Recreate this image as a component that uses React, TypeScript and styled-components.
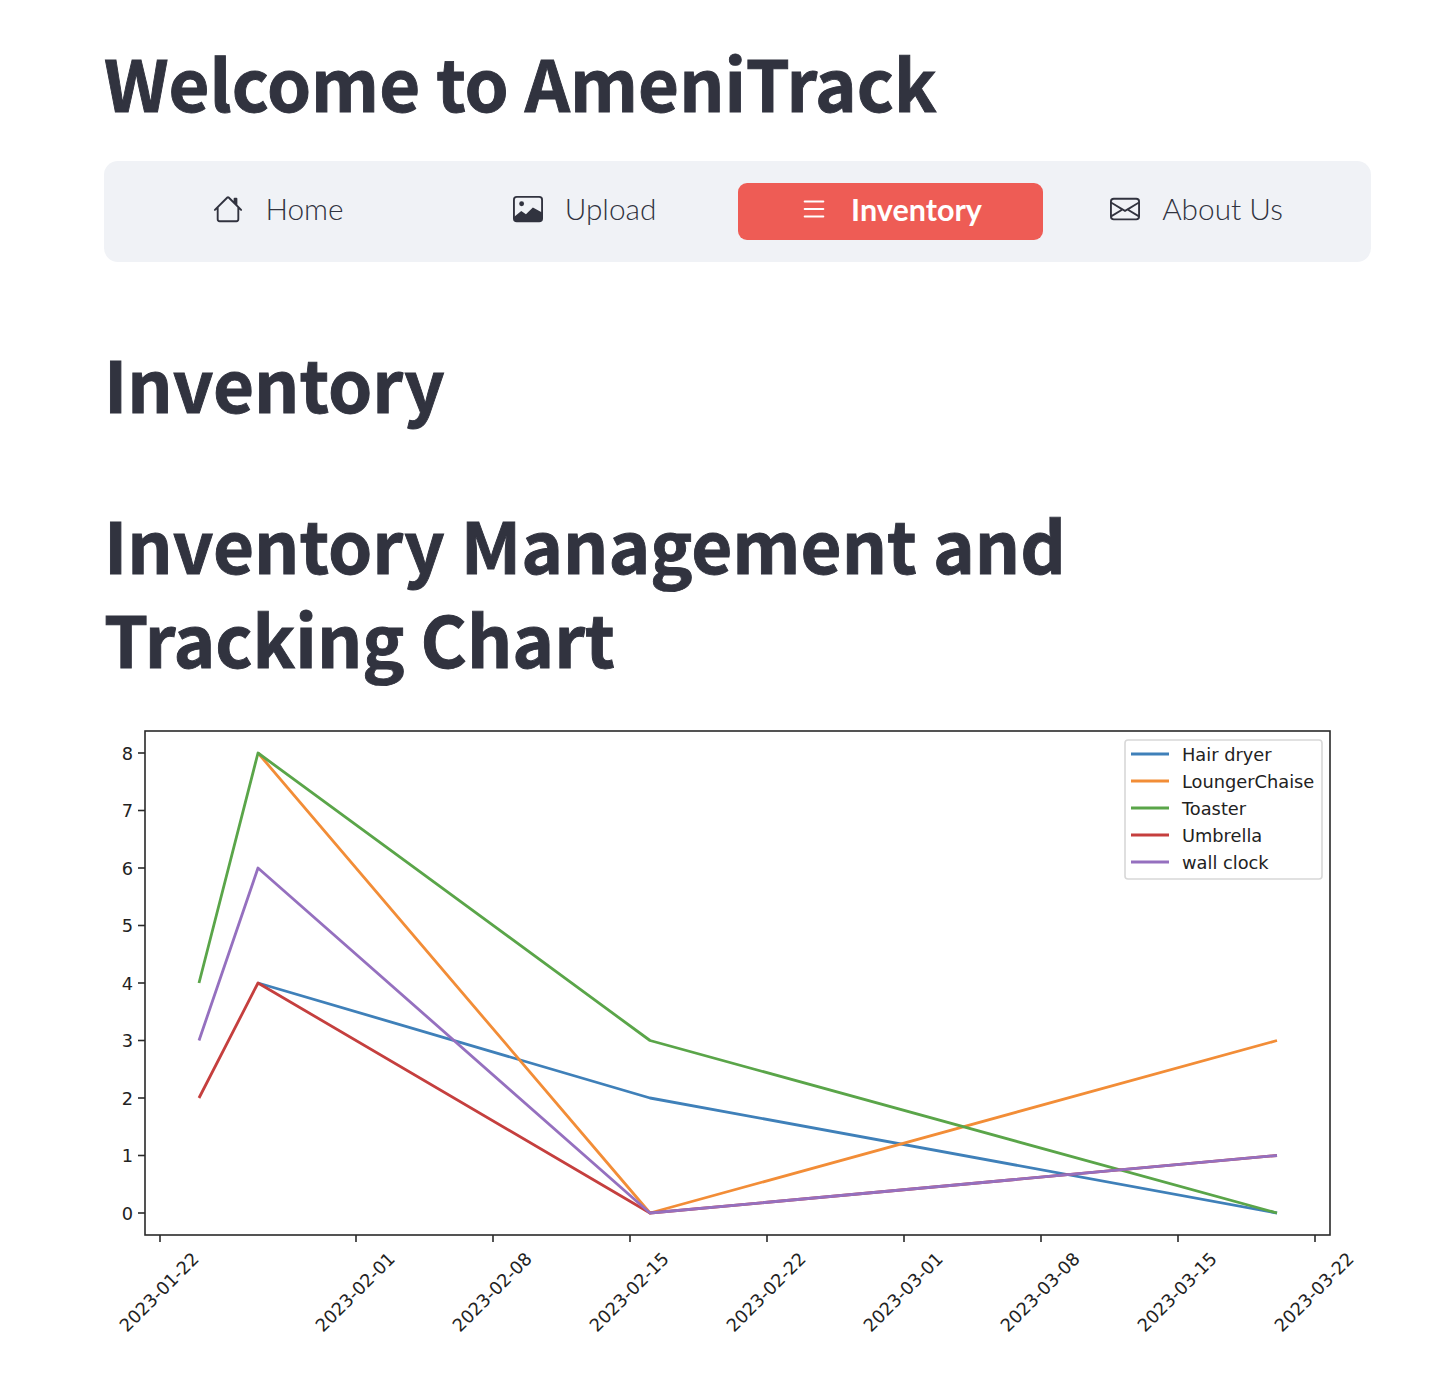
import React from "react";
import styled, { createGlobalStyle } from "styled-components";

const Global = createGlobalStyle`
  html, body { margin: 0; padding: 0; background: #fff; }
`;

const Page = styled.main`
  box-sizing: border-box;
  width: 1448px;
  height: 1378px;
  overflow: hidden;
  padding: 0 77px 0 104px;
  display: flex;
  flex-direction: column;
  color: #31333f;
`;

const Title = styled.h1`
  margin: 31px 0 0;
  font: 700 70.6px/100px "Noto Sans CJK SC", "Noto Sans", sans-serif;
  -webkit-text-stroke: 0.9px #31333f;
  color: #31333f;
`;

const Section = styled.h2<{ $top: number }>`
  margin: ${(p) => p.$top}px 0 0;
  max-width: 1100px;
  font: 700 70.8px/94px "Noto Sans CJK SC", "Noto Sans", sans-serif;
  -webkit-text-stroke: 0.9px #31333f;
  color: #31333f;
`;

const Nav = styled.nav`
  box-sizing: border-box;
  margin-top: 30px;
  height: 101px;
  padding: 22px;
  display: grid;
  grid-template-columns: repeat(4, 1fr);
  gap: 1px;
  background: #f0f2f6;
  border-radius: 14px;
`;

const NavItem = styled.a<{ $active?: boolean }>`
  box-sizing: border-box;
  display: flex;
  align-items: center;
  justify-content: center;
  gap: 22px;
  height: 57px;
  padding-bottom: ${(p) => (p.$active ? 5 : 6)}px;
  border-radius: 9px;
  font: ${(p) => (p.$active ? 700 : 300)} ${(p) => (p.$active ? 30.5 : 29.8)}px/1 Lato, sans-serif;
  color: ${(p) => (p.$active ? "#fff" : "#31333f")};
  background: ${(p) => (p.$active ? "#ee5c55" : "transparent")};
`;

const Glyph = styled.svg`
  width: 30px;
  height: 30px;
  flex: none;
`;

const Chart = styled.svg`
  display: block;
  margin-top: 37px;
  width: 1267px;
  height: 650px;
  font-family: "DejaVu Sans", sans-serif;
`;

const HomeIcon = () => (
  <Glyph viewBox="0 0 16 16" fill="currentColor">
    <path d="M8.707 1.5a1 1 0 0 0-1.414 0L.646 8.146a.5.5 0 0 0 .708.708L2 8.207V13.5A1.5 1.5 0 0 0 3.5 15h9a1.5 1.5 0 0 0 1.5-1.5V8.207l.646.647a.5.5 0 0 0 .708-.708L13 5.793V2.5a.5.5 0 0 0-.5-.5h-1a.5.5 0 0 0-.5.5v1.293L8.707 1.5ZM13 7.207V13.5a.5.5 0 0 1-.5.5h-9a.5.5 0 0 1-.5-.5V7.207l5-5 5 5Z" />
  </Glyph>
);
const ImageIcon = () => (
  <Glyph viewBox="0 0 16 16" fill="currentColor">
    <rect x="0.5" y="1.5" width="15" height="13" rx="1.5" fill="none" stroke="currentColor" />
    <circle cx="4.6" cy="5.2" r="1.3" />
    <path d="M.5 12.2 4.4 9l2.5 1.8 3.7-3.6 4.9 2.7V13a1.5 1.5 0 0 1-1.5 1.5H2A1.5 1.5 0 0 1 .5 13Z" />
  </Glyph>
);
const ListIcon = () => (
  <Glyph viewBox="0 0 16 16" fill="currentColor">
    <path fillRule="evenodd" d="M2.5 12a.5.5 0 0 1 .5-.5h10a.5.5 0 0 1 0 1H3a.5.5 0 0 1-.5-.5zm0-4a.5.5 0 0 1 .5-.5h10a.5.5 0 0 1 0 1H3a.5.5 0 0 1-.5-.5zm0-4a.5.5 0 0 1 .5-.5h10a.5.5 0 0 1 0 1H3a.5.5 0 0 1-.5-.5z" />
  </Glyph>
);
const MailIcon = () => (
  <Glyph viewBox="0 0 16 16" fill="currentColor">
    <path d="M0 4a2 2 0 0 1 2-2h12a2 2 0 0 1 2 2v8a2 2 0 0 1-2 2H2a2 2 0 0 1-2-2V4Zm2-1a1 1 0 0 0-1 1v.217l7 4.2 7-4.2V4a1 1 0 0 0-1-1H2Zm13 2.383-4.708 2.825L15 11.105V5.383Zm-.034 6.876-5.64-3.471L8 9.583l-1.326-.795-5.64 3.47A1 1 0 0 0 2 13h12a1 1 0 0 0 .966-.741ZM1 11.105l4.708-2.897L1 5.383v5.722Z" />
  </Glyph>
);

const OX = 104;
const OY = 721;
const px = (x: number) => x - OX;
const py = (y: number) => y - OY;
const yv = (v: number) => 1213 - v * 57.5;

const series: { name: string; color: string; pts: [number, number][] }[] = [
  { name: "Hair dryer", color: "#3f80b9", pts: [[258, 4], [650, 2], [1277, 0]] },
  { name: "LoungerChaise", color: "#f28d37", pts: [[258, 8], [650, 0], [1277, 3]] },
  { name: "Toaster", color: "#5aa549", pts: [[199, 4], [258, 8], [650, 3], [1277, 0]] },
  { name: "Umbrella", color: "#c53f3e", pts: [[199, 2], [258, 4], [650, 0], [1277, 1]] },
  { name: "wall clock", color: "#9570bf", pts: [[199, 3], [258, 6], [650, 0], [1277, 1]] },
];
const dates: [number, string][] = [
  [160, "2023-01-22"],
  [356, "2023-02-01"],
  [493, "2023-02-08"],
  [630, "2023-02-15"],
  [767, "2023-02-22"],
  [904, "2023-03-01"],
  [1041, "2023-03-08"],
  [1178, "2023-03-15"],
  [1315, "2023-03-22"],
];

const AXIS = "#2a2a2a";

export default function App() {
  return (
    <Page>
      <Global />
      <Title>Welcome to AmeniTrack</Title>
      <Nav>
        <NavItem><HomeIcon />Home</NavItem>
        <NavItem><ImageIcon />Upload</NavItem>
        <NavItem $active><ListIcon />Inventory</NavItem>
        <NavItem><MailIcon />About Us</NavItem>
      </Nav>
      <Section $top={73}>Inventory</Section>
      <Section $top={67}>Inventory Management and Tracking Chart</Section>
      <Chart viewBox="0 0 1267 650">
        {series.map((s) => (
          <polyline
            key={s.name}
            fill="none"
            stroke={s.color}
            strokeWidth="2.8"
            strokeLinejoin="round"
            points={s.pts.map(([x, v]) => `${px(x)},${py(yv(v))}`).join(" ")}
          />
        ))}
        <rect x={px(145)} y={py(731)} width={1185} height={504} fill="none" stroke={AXIS} strokeWidth="1.6" />
        {[0, 1, 2, 3, 4, 5, 6, 7, 8].map((v) => (
          <g key={v}>
            <line x1={px(138)} x2={px(145)} y1={py(yv(v))} y2={py(yv(v))} stroke={AXIS} strokeWidth="1.6" />
            <text x={px(133)} y={py(yv(v)) + 6.5} textAnchor="end" fontSize="17.8" fill="#222">{v}</text>
          </g>
        ))}
        {dates.map(([x, d]) => (
          <g key={d}>
            <line x1={px(x)} x2={px(x)} y1={py(1235)} y2={py(1242)} stroke={AXIS} strokeWidth="1.6" />
            <text
              transform={`translate(${px(x) + 40} ${py(1260)}) rotate(-45)`}
              textAnchor="end"
              fontSize="17.8"
              fill="#222"
            >
              {d}
            </text>
          </g>
        ))}
        <rect x={px(1125)} y={py(740)} width={197} height={139} rx="3" fill="#fff" fillOpacity="0.8" stroke="#d8d8d8" strokeWidth="1.6" />
        {series.map((s, i) => (
          <g key={s.name}>
            <line x1={px(1131)} x2={px(1169)} y1={py(754 + i * 27)} y2={py(754 + i * 27)} stroke={s.color} strokeWidth="2.8" />
            <text x={px(1182)} y={py(761 + i * 27)} fontSize="17.8" fill="#222">{s.name}</text>
          </g>
        ))}
      </Chart>
    </Page>
  );
}
